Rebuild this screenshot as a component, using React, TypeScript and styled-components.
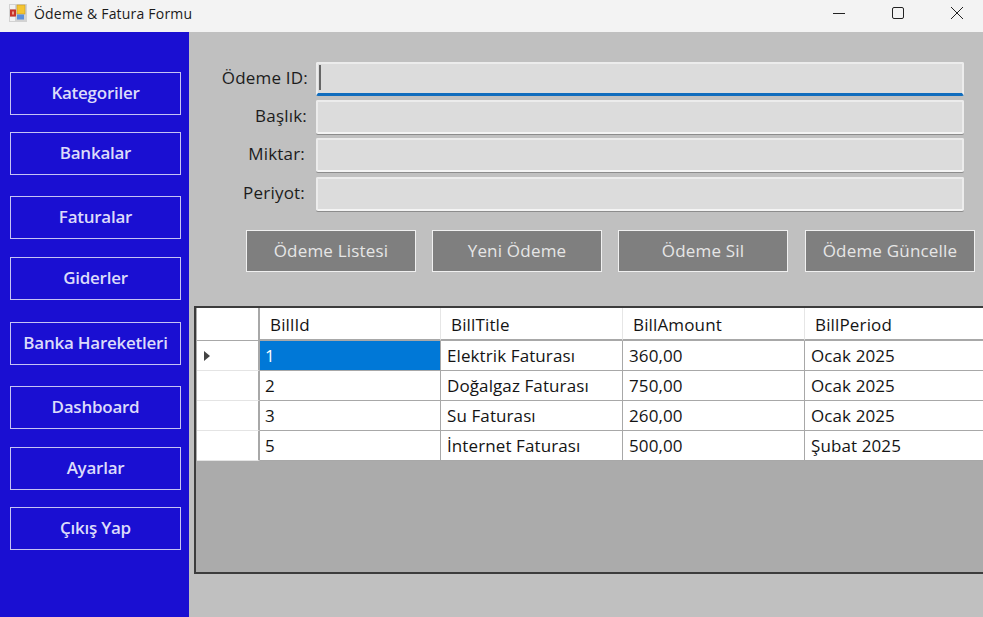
import { FC, Fragment } from "react";
import styled, { createGlobalStyle } from "styled-components";

const GlobalStyle = createGlobalStyle`
  html, body {
    margin: 0;
    padding: 0;
    overflow: hidden;
  }
  body {
    font-family: "Open Sans", "Noto Sans", sans-serif;
  }
  * {
    box-sizing: border-box;
  }
`;

const Window = styled.div`
  width: 983px;
  height: 617px;
  display: flex;
  flex-direction: column;
  overflow: hidden;
  background: #c0c0c0;
`;

const TitleBar = styled.div`
  height: 32px;
  flex: none;
  display: flex;
  align-items: center;
  background: #f3f3f3;
  padding-left: 9px;
  padding-bottom: 6px;
`;

const Title = styled.div`
  margin-left: 7px;
  font-size: 14px;
  color: #1a1a1a;
  flex: 1;
  letter-spacing: 0.2px;
`;

const WinButtons = styled.div`
  display: flex;
  gap: 7px;
`;

const WinButton = styled.div`
  width: 52px;
  height: 26px;
  display: flex;
  align-items: center;
  justify-content: center;
`;

const Body = styled.div`
  flex: 1;
  display: flex;
  min-height: 0;
`;

const Sidebar = styled.nav`
  width: 189px;
  flex: none;
  background: #1a0fd2;
  padding: 40px 8px 0 10px;
`;

const NavButton = styled.div<{ $top: number }>`
  width: 171px;
  height: 43px;
  margin-top: ${(p) => p.$top}px;
  border: 1.5px solid #c6c3f4;
  color: #dcdbfa;
  font-size: 17px;
  font-weight: 600;
  display: flex;
  align-items: center;
  justify-content: center;
  letter-spacing: -0.25px;
  padding-bottom: 3px;
`;

const Main = styled.main`
  flex: 1;
  min-width: 0;
  padding: 30px 0 0 5px;
`;

const Form = styled.div`
  display: grid;
  grid-template-columns: 122px 648px;
  row-gap: 4px;
`;

const Label = styled.label<{ $shift: number; $down?: boolean }>`
  height: 34px;
  display: flex;
  align-items: center;
  justify-content: flex-end;
  padding-right: ${(p) => p.$shift}px;
  padding-bottom: 3px;
  margin-top: ${(p) => (p.$down ? 1 : 0)}px;
  font-size: 17px;
  font-weight: 500;
  color: #1c1c1c;
  letter-spacing: 0.2px;
`;

const Field = styled.div<{ $focus?: boolean; $down?: boolean }>`
  height: 34px;
  margin-top: ${(p) => (p.$down ? 1 : 0)}px;
  background: #dcdcdc;
  border: 2px solid #ececec;
  border-bottom: ${(p) => (p.$focus ? "3px solid #0f6cbd" : "2px solid #f4f4f4")};
  border-radius: 2px;
  display: flex;
  align-items: flex-start;
  padding: 1px 0 0 1px;
  box-shadow: ${(p) => (p.$focus ? "none" : "0 1px 0 #8c8c8c")};
`;

const Caret = styled.div`
  width: 2px;
  height: 25px;
  background: #666;
`;

const Actions = styled.div`
  display: flex;
  gap: 16px;
  margin: 19px 0 0 52px;
`;

const ActionButton = styled.div<{ $nudge?: boolean }>`
  width: 170px;
  height: 42px;
  flex: none;
  margin-left: ${(p) => (p.$nudge ? 1 : 0)}px;
  background: #7f7f7f;
  border: 1.5px solid #f0f0f0;
  color: #e6e6e6;
  font-size: 17px;
  font-weight: 500;
  letter-spacing: 0.2px;
  display: flex;
  align-items: center;
  justify-content: center;
  padding-bottom: 2px;
`;

const Grid = styled.div`
  margin-top: 34px;
  height: 268px;
  width: 800px;
  background: #ababab;
  border: 2px solid #3c3c3c;
  border-right: none;
  padding-left: 1px;
  display: grid;
  grid-template-columns: 63px 181px 182px 182px 1fr;
  grid-template-rows: 33px repeat(4, 30px);
  align-content: start;
`;

const HeaderCell = styled.div`
  background: #fff;
  border-right: 1px solid #e6e6e6;
  border-bottom: 2px solid #a8a8a8;
  display: flex;
  align-items: center;
  padding: 1px 0 0 10px;
  font-size: 17px;
  font-weight: 500;
  color: #141414;
  letter-spacing: 0.15px;
`;

const RowHead = styled.div`
  background: #fff;
  border-right: 2px solid #a8a8a8;
  border-bottom: 1px solid #e4e4e4;
  display: flex;
  align-items: center;
  padding-left: 7px;
`;

const Corner = styled(HeaderCell)`
  border-right: 2px solid #a8a8a8;
  border-bottom: 1px solid #a8a8a8;
`;

const Arrow = styled.div`
  width: 0;
  height: 0;
  border-top: 5px solid transparent;
  border-bottom: 5px solid transparent;
  border-left: 6px solid #444;
`;

const Cell = styled.div<{ $selected?: boolean; $first?: boolean }>`
  background: ${(p) => (p.$selected ? "#0078d7" : "#fff")};
  color: ${(p) => (p.$selected ? "#fff" : "#141414")};
  border-right: 1px solid #a8a8a8;
  border-bottom: 1px solid #a8a8a8;
  display: flex;
  align-items: center;
  padding-left: ${(p) => (p.$first ? 5 : 6)}px;
  font-size: 17px;
  font-weight: 500;
  letter-spacing: 0.1px;
  white-space: nowrap;
`;

const navItems = [
  { label: "Kategoriler", top: 0 },
  { label: "Bankalar", top: 17 },
  { label: "Faturalar", top: 21 },
  { label: "Giderler", top: 18 },
  { label: "Banka Hareketleri", top: 22 },
  { label: "Dashboard", top: 21 },
  { label: "Ayarlar", top: 18 },
  { label: "Çıkış Yap", top: 17 },
];

const fields = [
  { label: "Ödeme ID:", shift: 8, focus: true },
  { label: "Başlık:", shift: 9 },
  { label: "Miktar:", shift: 11 },
  { label: "Periyot:", shift: 11, down: true },
];

const actions = ["Ödeme Listesi", "Yeni Ödeme", "Ödeme Sil", "Ödeme Güncelle"];
const columns = ["BillId", "BillTitle", "BillAmount", "BillPeriod"];

const rows = [
  ["1", "Elektrik Faturası", "360,00", "Ocak 2025"],
  ["2", "Doğalgaz Faturası", "750,00", "Ocak 2025"],
  ["3", "Su Faturası", "260,00", "Ocak 2025"],
  ["5", "İnternet Faturası", "500,00", "Şubat 2025"],
];

const AppIcon: FC = () => (
  <svg width="18" height="18" viewBox="0 0 18 18">
    <rect x="0" y="0" width="18" height="18" fill="#d2d2d2" />
    <rect x="1" y="1" width="5" height="4" fill="#f2f2f2" />
    <rect x="1" y="13" width="5" height="4" fill="#f2f2f2" />
    <rect x="1" y="5.5" width="6" height="7" fill="#c8322a" />
    <rect x="3" y="7.5" width="2" height="3" fill="#e8a090" />
    <rect x="8" y="1" width="8" height="9" fill="#f5c531" stroke="#c89a20" strokeWidth="0.6" />
    <rect x="8" y="10.5" width="7" height="5" fill="#5b8fdc" />
  </svg>
);

const App: FC = () => {
  return (
    <Window>
      <GlobalStyle />
      <TitleBar>
        <AppIcon />
        <Title>Ödeme &amp; Fatura Formu</Title>
        <WinButtons>
          <WinButton>
            <svg width="14" height="14" viewBox="0 0 14 14">
              <path d="M1 7.5h12" stroke="#222" strokeWidth="1" />
            </svg>
          </WinButton>
          <WinButton>
            <svg width="14" height="14" viewBox="0 0 14 14">
              <rect x="1.5" y="1.5" width="11" height="11" rx="1.5" fill="none" stroke="#222" strokeWidth="1" />
            </svg>
          </WinButton>
          <WinButton>
            <svg width="14" height="14" viewBox="0 0 14 14">
              <path d="M1 1l12 12M13 1L1 13" stroke="#222" strokeWidth="1" />
            </svg>
          </WinButton>
        </WinButtons>
      </TitleBar>
      <Body>
        <Sidebar>
          {navItems.map((item) => (
            <NavButton key={item.label} $top={item.top}>
              {item.label}
            </NavButton>
          ))}
        </Sidebar>
        <Main>
          <Form>
            {fields.map((f) => (
              <Fragment key={f.label}>
                <Label $shift={f.shift} $down={f.down}>
                  {f.label}
                </Label>
                <Field $focus={f.focus} $down={f.down}>
                  {f.focus && <Caret />}
                </Field>
              </Fragment>
            ))}
          </Form>
          <Actions>
            {actions.map((a, i) => (
              <ActionButton key={a} $nudge={i === 3}>
                {a}
              </ActionButton>
            ))}
          </Actions>
          <Grid>
            <Corner />
            {columns.map((c) => (
              <HeaderCell key={c}>{c}</HeaderCell>
            ))}
            {rows.map((row, i) => (
              <Fragment key={row[0]}>
                <RowHead>{i === 0 && <Arrow />}</RowHead>
                {row.map((value, j) => (
                  <Cell key={j} $first={j === 0} $selected={i === 0 && j === 0}>
                    {value}
                  </Cell>
                ))}
              </Fragment>
            ))}
          </Grid>
        </Main>
      </Body>
    </Window>
  );
};

export default App;
